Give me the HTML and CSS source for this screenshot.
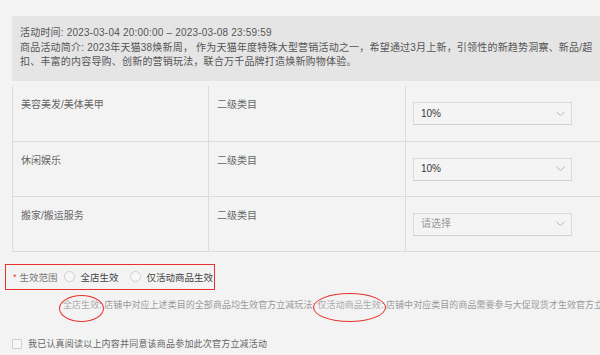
FILE: index.html
```
<!DOCTYPE html>
<html lang="zh-CN">
<head>
    <meta charset="UTF-8">
    <title>官方立减活动报名</title>
    <link rel="stylesheet" href="styles.css">
</head>
<body>
    <div class="page">
        <div class="info-box">
            <div class="info-line">活动时间: 2023-03-04 20:00:00 – 2023-03-08 23:59:59</div>
            <div class="info-line">商品活动简介: 2023年天猫38焕新周， 作为天猫年度特殊大型营销活动之一，希望通过3月上新，引领性的新趋势洞察、新品/超</div>
            <div class="info-line">扣、丰富的内容导购、创新的营销玩法，联合万千品牌打造焕新购物体验。</div>
        </div>

        <table class="cat-table">
            <tr>
                <td class="col-name">美容美发/美体美甲</td>
                <td class="col-level">二级类目</td>
                <td class="col-select">
                    <div class="select">
                        <span>10%</span>
                        <svg class="chevron" width="9" height="6" viewBox="0 0 9 6"><polyline points="0.5,0.8 4.5,4.6 8.5,0.8" fill="none" stroke="#b3b3b3" stroke-width="1"/></svg>
                    </div>
                </td>
            </tr>
            <tr>
                <td class="col-name">休闲娱乐</td>
                <td class="col-level">二级类目</td>
                <td class="col-select">
                    <div class="select">
                        <span>10%</span>
                        <svg class="chevron" width="9" height="6" viewBox="0 0 9 6"><polyline points="0.5,0.8 4.5,4.6 8.5,0.8" fill="none" stroke="#b3b3b3" stroke-width="1"/></svg>
                    </div>
                </td>
            </tr>
            <tr>
                <td class="col-name">搬家/搬运服务</td>
                <td class="col-level">二级类目</td>
                <td class="col-select">
                    <div class="select placeholder">
                        <span>请选择</span>
                        <svg class="chevron" width="9" height="6" viewBox="0 0 9 6"><polyline points="0.5,0.8 4.5,4.6 8.5,0.8" fill="none" stroke="#b3b3b3" stroke-width="1"/></svg>
                    </div>
                </td>
            </tr>
        </table>

        <div class="scope-row">
            <span class="required">*</span>
            <span class="scope-label">生效范围</span>
            <label class="radio"><span class="radio-dot"></span>全店生效</label>
            <label class="radio"><span class="radio-dot"></span>仅活动商品生效</label>
        </div>

        <div class="note">
            <span class="note-key mark-one">全店生效</span>: 店铺中对应上述类目的全部商品均生效官方立减玩法; <span class="note-key mark-two">仅活动商品生效</span>: 店铺中对应类目的商品需要参与大促现货才生效官方立
        </div>

        <label class="agree">
            <span class="checkbox"></span>
            我已认真阅读以上内容并同意该商品参加此次官方立减活动
        </label>
    </div>
</body>
</html>
```

FILE: styles.css
```
* {
    margin: 0;
    padding: 0;
    box-sizing: border-box;
}

body {
    background: #f3f3f3;
    font-family: "Liberation Sans", "Noto Sans CJK SC", sans-serif;
    color: #555;
    width: 600px;
    height: 355px;
    overflow: hidden;
}

.page {
    padding: 16px 0 0 12px;
}

.info-box {
    background: #e5e5e5;
    height: 65px;
    padding: 10px 0 0 8px;
    font-size: 10px;
    letter-spacing: 0.2px;
    color: #555;
    white-space: nowrap;
}

.info-line {
    line-height: 14.5px;
}

.cat-table {
    margin-top: 5px;
    width: 588px;
    border-collapse: collapse;
    font-size: 10px;
    color: #666;
}

.cat-table td {
    height: 55px;
    vertical-align: top;
    border-left: 1px solid #dcdcdc;
    border-bottom: 1px solid #dcdcdc;
    padding: 12px 0 0 8px;
    line-height: 14px;
}

.col-name {
    width: 196px;
}

.col-level {
    width: 197px;
}

.cat-table td.col-select {
    padding: 16px 0 0 7px;
}

.select {
    width: 159px;
    height: 23px;
    border: 1px solid #dadada;
    border-bottom-color: #d0d0d0;
    background: #f4f4f4;
    display: flex;
    align-items: center;
    justify-content: space-between;
    padding: 0 6px 0 7px;
    color: #333;
    font-size: 10px;
}

.select.placeholder {
    color: #999;
}

.chevron {
    display: block;
}

.scope-row {
    margin: 12px 0 0 -7px;
    width: 210px;
    height: 26px;
    border: 1.5px solid #e8322c;
    display: flex;
    align-items: center;
    padding-left: 7px;
    font-size: 9.5px;
    color: #444;
    white-space: nowrap;
}

.required {
    color: #e8322c;
    margin-right: 3px;
    font-size: 9px;
}

.scope-label {
    color: #777;
    margin-right: 6px;
}

.radio {
    display: flex;
    align-items: center;
    flex-shrink: 0;
    margin-right: 11px;
}

.radio-dot {
    width: 11px;
    height: 11px;
    border: 1px solid #cfcfcf;
    border-radius: 50%;
    background: #f7f7f7;
    margin-right: 6px;
}

.note {
    margin: 8px 0 0 51px;
    font-size: 9px;
    letter-spacing: 0.05px;
    line-height: 14px;
    color: #999;
    white-space: nowrap;
}

.note-key {
    color: #aaa;
    position: relative;
}

.mark-one::after,
.mark-two::after {
    content: '';
    position: absolute;
    border: 1.3px solid #e8322c;
    border-radius: 50%;
}

.mark-one::after {
    left: -4px;
    top: -5px;
    width: 43px;
    height: 25px;
}

.mark-two::after {
    left: -5px;
    top: -7px;
    width: 71px;
    height: 27px;
}

.agree {
    margin-top: 25px;
    display: flex;
    align-items: center;
    font-size: 9px;
    letter-spacing: 0.2px;
    color: #666;
    line-height: 14px;
}

.checkbox {
    width: 10px;
    height: 10px;
    border: 1px solid #d0d0d0;
    background: #f7f7f7;
    border-radius: 1px;
    margin-right: 6px;
}
```
